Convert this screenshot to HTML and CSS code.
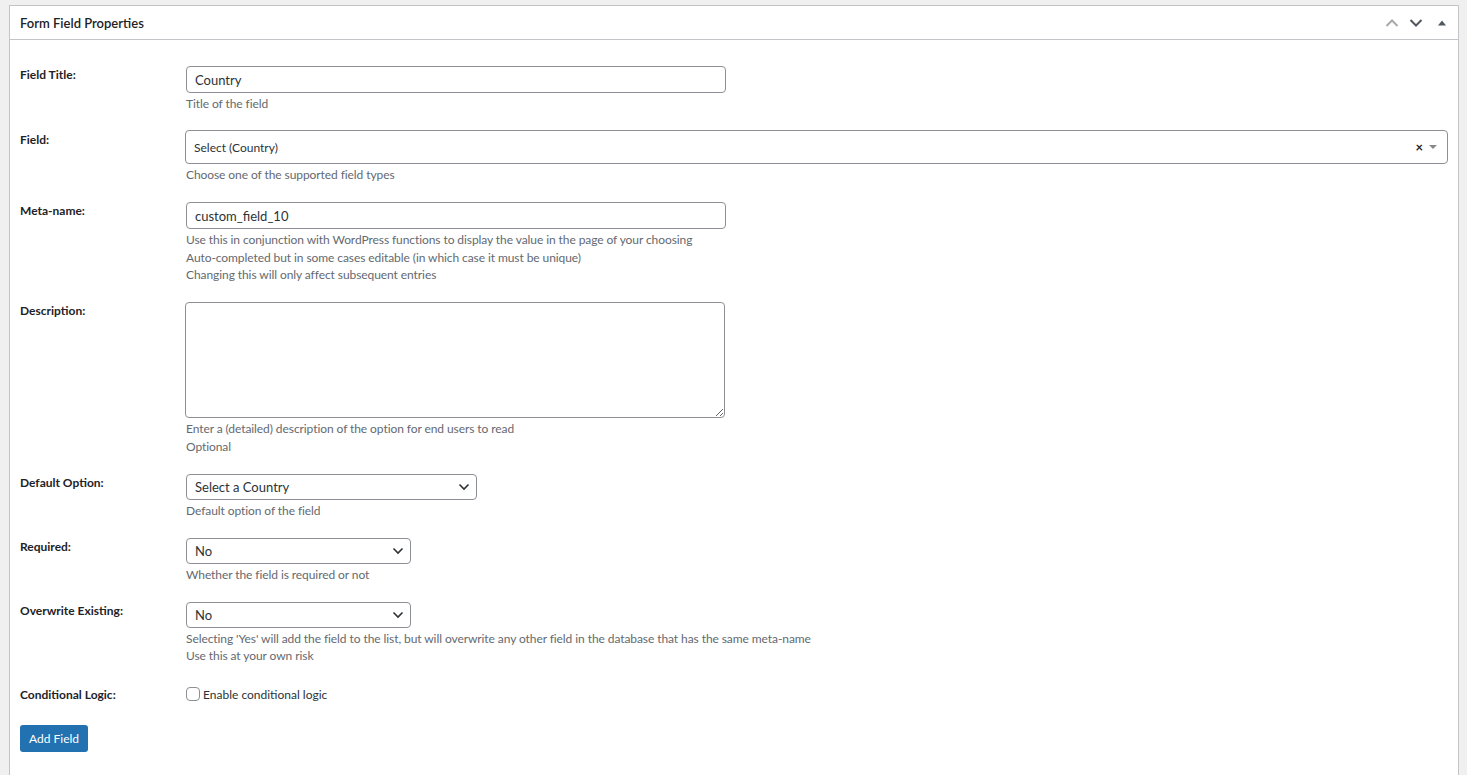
FILE: index.html
```html
<!DOCTYPE html>
<html>
<head>
<title>Form Field Properties</title>
<link rel="stylesheet" href="styles.css">
</head>
<body>

<div class="postbox">
  <div class="postbox__header">
    <h2>Form Field Properties</h2>
    <div class="postbox__acciones">
      <svg class="flecha flecha--clara" width="14" height="10" viewBox="0 0 14 10"><path d="M1.5 8 L7 2.5 L12.5 8" fill="none" stroke="currentColor" stroke-width="2"/></svg>
      <svg class="flecha" width="14" height="10" viewBox="0 0 14 10"><path d="M1.5 2 L7 7.5 L12.5 2" fill="none" stroke="currentColor" stroke-width="2"/></svg>
      <svg class="triangulo" width="10" height="10" viewBox="0 0 10 10"><path d="M1 7.5 L5 2.5 L9 7.5 Z" fill="currentColor"/></svg>
    </div>
  </div>

  <div class="postbox__inside">
    <ul class="campos">
      <li class="campo">
        <label class="campo__etiqueta">Field Title:</label>
        <div class="campo__control">
          <input class="entrada" type="text" value="Country">
          <span class="descripcion">Title of the field</span>
        </div>
      </li>

      <li class="campo">
        <label class="campo__etiqueta">Field:</label>
        <div class="campo__control">
          <div class="select2">
            <span class="select2__texto">Select (Country)</span>
            <span class="select2__borrar">×</span>
            <svg width="8" height="6" viewBox="0 0 8 6"><path d="M0 1 L8 1 L4 5 Z" fill="#888"/></svg>
          </div>
          <span class="descripcion">Choose one of the supported field types</span>
        </div>
      </li>

      <li class="campo">
        <label class="campo__etiqueta">Meta-name:</label>
        <div class="campo__control">
          <input class="entrada" type="text" value="custom_field_10">
          <span class="descripcion">Use this in conjunction with WordPress functions to display the value in the page of your choosing<br>Auto-completed but in some cases editable (in which case it must be unique)<br>Changing this will only affect subsequent entries</span>
        </div>
      </li>

      <li class="campo">
        <label class="campo__etiqueta">Description:</label>
        <div class="campo__control">
          <textarea class="area"></textarea>
          <span class="descripcion">Enter a (detailed) description of the option for end users to read<br>Optional</span>
        </div>
      </li>

      <li class="campo">
        <label class="campo__etiqueta">Default Option:</label>
        <div class="campo__control">
          <div class="selector selector--pais">
            <span>Select a Country</span>
            <svg width="12" height="8" viewBox="0 0 12 8"><path d="M1.5 1.5 L6 6 L10.5 1.5" fill="none" stroke="#2c3338" stroke-width="1.6"/></svg>
          </div>
          <span class="descripcion">Default option of the field</span>
        </div>
      </li>

      <li class="campo">
        <label class="campo__etiqueta">Required:</label>
        <div class="campo__control">
          <div class="selector">
            <span>No</span>
            <svg width="12" height="8" viewBox="0 0 12 8"><path d="M1.5 1.5 L6 6 L10.5 1.5" fill="none" stroke="#2c3338" stroke-width="1.6"/></svg>
          </div>
          <span class="descripcion">Whether the field is required or not</span>
        </div>
      </li>

      <li class="campo">
        <label class="campo__etiqueta">Overwrite Existing:</label>
        <div class="campo__control">
          <div class="selector">
            <span>No</span>
            <svg width="12" height="8" viewBox="0 0 12 8"><path d="M1.5 1.5 L6 6 L10.5 1.5" fill="none" stroke="#2c3338" stroke-width="1.6"/></svg>
          </div>
          <span class="descripcion">Selecting 'Yes' will add the field to the list, but will overwrite any other field in the database that has the same meta-name<br>Use this at your own risk</span>
        </div>
      </li>

      <li class="campo campo--check">
        <label class="campo__etiqueta">Conditional Logic:</label>
        <div class="campo__control">
          <label class="check"><input type="checkbox"> Enable conditional logic</label>
        </div>
      </li>
    </ul>

    <button class="boton">Add Field</button>
  </div>
</div>

</body>
</html>
```

FILE: styles.css
```css
html {
  font-family: Lato, "Liberation Sans", sans-serif;
  font-size: 12px;
}

body {
  margin: 0;
  padding: 5px 8px 0 9px;
  background: #f0f0f1;
  color: #2c3338;
}

.postbox {
  background: #fff;
  border: 1px solid #c3c4c7;
  border-bottom: none;
  min-height: 770px;
}

.postbox__header {
  display: flex;
  align-items: center;
  justify-content: space-between;
  height: 33px;
  border-bottom: 1px solid #c3c4c7;
}

.postbox__header h2 {
  margin: 0;
  padding-left: 10px;
  font-size: 13px;
  font-weight: 600;
  color: #1d2327;
}

.postbox__acciones {
  display: flex;
  align-items: center;
  gap: 10px;
  padding-right: 11px;
  color: #50575e;
}

.flecha--clara {
  color: #a7aaad;
}

.triangulo {
  margin-left: 4px;
  color: #50575e;
}

.postbox__inside {
  padding: 26px 10px 22px 10px;
}

.campos {
  list-style: none;
  margin: 0;
  padding: 0;
}

.campo {
  display: flex;
  margin-bottom: 18.5px;
}

.campo__etiqueta {
  width: 166px;
  flex-shrink: 0;
  font-weight: 700;
  color: #1d2327;
  line-height: 17px;
}

.campo__control {
  display: flex;
  flex-direction: column;
  align-items: flex-start;
  flex: 1;
}

.entrada {
  box-sizing: border-box;
  width: 540px;
  height: 27px;
  margin: 0 0 2px 0;
  padding: 0 8px;
  border: 1px solid #8c8f94;
  border-radius: 4px;
  font-family: inherit;
  font-size: 13px;
  color: #2c3338;
}

.descripcion {
  color: #646970;
  line-height: 17.5px;
  letter-spacing: -0.08px;
}

.select2 {
  box-sizing: border-box;
  display: flex;
  align-items: center;
  width: calc(100% + 1px);
  height: 34px;
  margin: -1px 0 2px -1px;
  padding: 0 10px 0 8px;
  border: 1px solid #8c8f94;
  border-radius: 4px;
}

.select2__texto {
  flex: 1;
  color: #2c3338;
}

.select2__borrar {
  font-weight: 700;
  font-size: 13px;
  margin-right: 6px;
  color: #1d2327;
}

.area {
  box-sizing: border-box;
  width: 540px;
  height: 116px;
  margin: 0 0 2px -1px;
  border: 1px solid #8c8f94;
  border-radius: 4px;
  font-family: inherit;
}

.selector {
  box-sizing: border-box;
  display: flex;
  align-items: center;
  justify-content: space-between;
  width: 225px;
  height: 26px;
  margin-bottom: 2px;
  padding: 0 6px 0 8px;
  border: 1px solid #8c8f94;
  border-radius: 4px;
  font-size: 13px;
  color: #2c3338;
}

.selector--pais {
  width: 291px;
}

.campo--check {
  margin-top: 21px;
  margin-bottom: 22px;
}

.check {
  display: flex;
  align-items: center;
  gap: 3px;
  color: #2c3338;
  line-height: 17px;
}

.check input {
  -webkit-appearance: none;
  appearance: none;
  width: 14px;
  height: 14px;
  margin: 0;
  border: 1px solid #8c8f94;
  border-radius: 4px;
  background: #fff;
}

.boton {
  height: 27px;
  padding: 0 9px;
  border: none;
  border-radius: 3px;
  background: #2271b1;
  color: #fff;
  font-family: inherit;
  font-size: 12px;
}
```
